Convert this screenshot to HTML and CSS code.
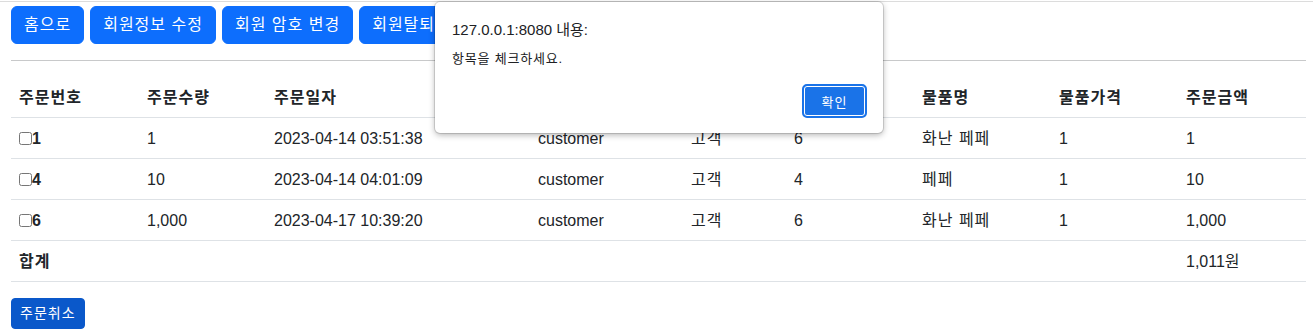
FILE: index.html
```html
<!DOCTYPE html>
<html lang="ko">
<head>
    <meta charset="UTF-8">
    <meta name="viewport" content="width=device-width, initial-scale=1.0">
    <title>주문 목록</title>
    <link rel="stylesheet" href="styles.css">
</head>
<body>
    <div class="topline"></div>
    <div class="page">
        <div class="menu">
            <button class="btn">홈으로</button>
            <button class="btn">회원정보 수정</button>
            <button class="btn">회원 암호 변경</button>
            <button class="btn">회원탈퇴</button>
        </div>

        <hr>

        <table class="orders">
            <thead>
                <tr>
                    <th class="c-no">주문번호</th>
                    <th class="c-qty">주문수량</th>
                    <th class="c-date">주문일자</th>
                    <th class="c-id">회원아이디</th>
                    <th class="c-name">회원이름</th>
                    <th class="c-pno">물품번호</th>
                    <th class="c-pname">물품명</th>
                    <th class="c-price">물품가격</th>
                    <th class="c-sum">주문금액</th>
                </tr>
            </thead>
            <tbody>
                <tr>
                    <td><input type="checkbox" class="chk"><b>1</b></td>
                    <td>1</td>
                    <td>2023-04-14 03:51:38</td>
                    <td>customer</td>
                    <td class="ko">고객</td>
                    <td>6</td>
                    <td class="ko">화난 페페</td>
                    <td>1</td>
                    <td>1</td>
                </tr>
                <tr>
                    <td><input type="checkbox" class="chk"><b>4</b></td>
                    <td>10</td>
                    <td>2023-04-14 04:01:09</td>
                    <td>customer</td>
                    <td class="ko">고객</td>
                    <td>4</td>
                    <td class="ko">페페</td>
                    <td>1</td>
                    <td>10</td>
                </tr>
                <tr>
                    <td><input type="checkbox" class="chk"><b>6</b></td>
                    <td>1,000</td>
                    <td>2023-04-17 10:39:20</td>
                    <td>customer</td>
                    <td class="ko">고객</td>
                    <td>6</td>
                    <td class="ko">화난 페페</td>
                    <td>1</td>
                    <td>1,000</td>
                </tr>
                <tr>
                    <td class="ko"><b>합계</b></td>
                    <td></td>
                    <td></td>
                    <td></td>
                    <td></td>
                    <td></td>
                    <td></td>
                    <td></td>
                    <td>1,011<span class="ko">원</span></td>
                </tr>
            </tbody>
        </table>

        <button class="btn btn-sm">주문취소</button>
    </div>

    <div class="alert-box">
        <div class="alert-title">127.0.0.1:8080 내용:</div>
        <div class="alert-msg">항목을 체크하세요.</div>
        <div class="alert-actions">
            <button class="alert-ok">확인</button>
        </div>
    </div>
</body>
</html>
```

FILE: styles.css
```css
body {
    margin: 0;
    font-family: "Liberation Sans", "Noto Sans CJK KR", sans-serif;
    font-size: 16px;
    line-height: 1.5;
    color: #212529;
    background: #fff;
}
.topline {
    height: 1px;
    margin-top: 1px;
    background-color: #dcdcdc;
}
.page {
    padding: 4px 7px 0 11px;
}
.menu {
    display: flex;
    gap: 6px;
}
.btn {
    font-family: "Liberation Sans", "Noto Sans CJK KR", sans-serif;
    font-size: 16px;
    line-height: 24px;
    letter-spacing: 1px;
    color: #fff;
    background-color: #0d6efd;
    border: 1px solid #0d6efd;
    border-radius: 6px;
    padding: 6px 12px;
    cursor: pointer;
}
.btn-sm {
    font-size: 14px;
    line-height: 21px;
    padding: 4px 8px;
    border-radius: 4px;
    background-color: #0a58ca;
    border-color: #0a58ca;
}
hr {
    margin: 16px 0;
    border: 0;
    border-top: 1px solid #c8c9ca;
}
.orders {
    width: 100%;
    table-layout: fixed;
    border-collapse: collapse;
    margin-bottom: 16px;
}
.orders th,
.orders td {
    text-align: left;
    padding: 9px 8px 7px;
    border-bottom: 1px solid #dee2e6;
    white-space: nowrap;
}
.orders th {
    font-weight: bold;
    letter-spacing: 1px;
}
.orders .ko,
.ko {
    letter-spacing: 1px;
}
.c-no { width: 112px; }
.c-qty { width: 111px; }
.c-date { width: 248px; }
.c-id { width: 137px; }
.c-name { width: 87px; }
.c-pno { width: 112px; }
.c-pname { width: 121px; }
.c-price { width: 111px; }
.chk {
    width: 13px;
    height: 13px;
    margin: 0;
    vertical-align: -1px;
}
.alert-box {
    position: absolute;
    left: 435px;
    top: 2px;
    width: 448px;
    box-sizing: border-box;
    padding: 18px 16px 15px 17px;
    background: #fff;
    border-radius: 5px;
    box-shadow: 0 0 0 1px rgba(0,0,0,0.12), 0 2px 6px rgba(0,0,0,0.3);
    font-family: "Liberation Sans", "Noto Sans CJK KR", sans-serif;
    color: #202124;
}
.alert-title {
    font-size: 15px;
    line-height: 20px;
}
.alert-msg {
    font-size: 13px;
    line-height: 18px;
    margin-top: 10px;
    letter-spacing: 0.8px;
}
.alert-actions {
    display: flex;
    justify-content: flex-end;
    margin-top: 16px;
}
.alert-ok {
    width: 65px;
    height: 34px;
    font-family: "Liberation Sans", "Noto Sans CJK KR", sans-serif;
    font-size: 13px;
    letter-spacing: 1px;
    color: #fff;
    background-color: #1a73e8;
    border: 2px solid #1a73e8;
    border-radius: 5px;
    box-shadow: inset 0 0 0 1px #fff;
}
```
